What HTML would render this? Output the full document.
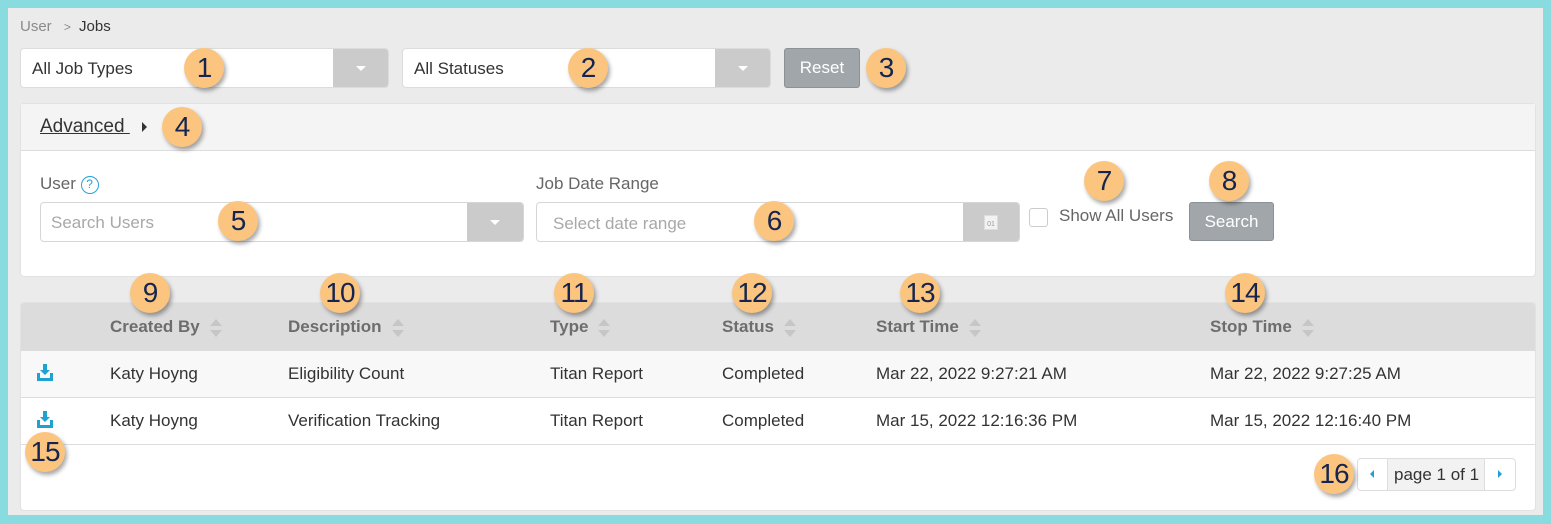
<!DOCTYPE html>
<html><head><meta charset="utf-8"><style>
*{box-sizing:border-box;margin:0;padding:0}
body{width:1551px;height:524px;background:#88dcdf;position:relative;overflow:hidden;font-family:"Liberation Sans",sans-serif;color:#333;font-size:17px}
.a{position:absolute}
#inner{left:8px;top:8px;width:1535px;height:507px;background:#ebebeb}
.sel{background:#fff;border:1px solid #dcdcdc;border-radius:4px;overflow:hidden}
.sel .t{position:absolute;left:11px;top:10px}
.sel .b{position:absolute;right:0;top:0;bottom:0;width:55px;background:#cbcbcb}
.caret{position:absolute;left:50%;top:50%;margin:-2px 0 0 -5px;border-left:5px solid transparent;border-right:5px solid transparent;border-top:5px solid #fff}
.btn{background:#a1a6aa;border:1px solid #8c9196;border-radius:3px;color:#fff;text-align:center}
.badge{width:40px;height:40px;border-radius:50%;background:#fcc57f;box-shadow:2px 3px 4px rgba(0,0,0,.35);color:#15254f;font-family:"Liberation Sans",Arial,sans-serif;font-size:28px;text-align:center;line-height:40px;letter-spacing:-1px}
.th{top:317px;font-weight:bold;color:#6d6d6d}
.sort{display:inline-block;vertical-align:middle;margin-left:10px;width:12px;height:18px;position:relative}
.sort:before{content:"";position:absolute;top:0;left:0;border-left:6px solid transparent;border-right:6px solid transparent;border-bottom:7px solid #c6c6c6}
.sort:after{content:"";position:absolute;bottom:0;left:0;border-left:6px solid transparent;border-right:6px solid transparent;border-top:7px solid #c6c6c6}
.td{color:#333}
</style></head><body>
<div id="inner" class="a"></div>
<div class="a" style="left:20px;top:18px;color:#8a8a8a;font-size:15px">User <span style="margin:0 4px 0 8px;font-size:12px">&gt;</span> <span style="color:#333">Jobs</span></div>

<div class="a sel" style="left:20px;top:48px;width:369px;height:40px"><span class="t">All Job Types</span><div class="b"><div class="caret"></div></div></div>
<div class="a sel" style="left:402px;top:48px;width:369px;height:40px"><span class="t">All Statuses</span><div class="b"><div class="caret"></div></div></div>
<div class="a btn" style="left:784px;top:48px;width:76px;height:40px;line-height:38px">Reset</div>

<div class="a" style="left:20px;top:103px;width:1516px;height:174px;background:#fff;border:1px solid #e2e2e2;border-radius:4px"></div>
<div class="a" style="left:21px;top:104px;width:1514px;height:47px;background:#f4f4f4;border-bottom:1px solid #ddd"></div>
<div class="a" style="left:40px;top:116px;font-size:19px;color:#333;text-decoration:underline">Advanced&nbsp;</div>
<div class="a" style="left:142px;top:122px;border-top:5px solid transparent;border-bottom:5px solid transparent;border-left:5px solid #333"></div>

<div class="a" style="left:40px;top:174px;color:#666">User <span style="display:inline-block;width:18px;height:18px;border:1.5px solid #27a3d6;border-radius:50%;color:#27a3d6;font-size:12px;text-align:center;line-height:15px;vertical-align:1px">?</span></div>
<div class="a sel" style="left:40px;top:202px;width:484px;height:40px;border-color:#d6d6d6"><span class="t" style="left:10px;color:#a8a8a8">Search Users</span><div class="b" style="width:56px"><div class="caret"></div></div></div>
<div class="a" style="left:536px;top:174px;color:#666">Job Date Range</div>
<div class="a sel" style="left:536px;top:202px;width:484px;height:40px;border-color:#d6d6d6"><span class="t" style="left:16px;top:11px;color:#a8a8a8">Select date range</span><div class="b" style="width:56px"><div style="position:absolute;left:21px;top:12px;width:14px;height:15px;background:#f2f2f2;border:1px solid #ddd;font-size:7px;color:#999;text-align:center;line-height:18px">01</div></div></div>
<div class="a" style="left:1029px;top:208px;width:19px;height:19px;border:1px solid #ccc;border-radius:3px;background:#fff"></div>
<div class="a" style="left:1059px;top:206px;color:#666">Show All Users</div>
<div class="a btn" style="left:1189px;top:202px;width:85px;height:39px;line-height:38px">Search</div>

<div class="a" style="left:20px;top:302px;width:1516px;height:209px;background:#fff;border:1px solid #e2e2e2;border-radius:4px;overflow:hidden">
<div class="a" style="left:0;top:0;width:100%;height:48px;background:#dcdcdc"></div>
<div class="a" style="left:0;top:48px;width:100%;height:47px;background:#f8f8f8;border-bottom:1px solid #ddd"></div>
<div class="a" style="left:0;top:95px;width:100%;height:47px;border-bottom:1px solid #ddd"></div>
</div>
<div class="a th" style="left:110px">Created By<span class="sort"></span></div>
<div class="a th" style="left:288px">Description<span class="sort"></span></div>
<div class="a th" style="left:550px">Type<span class="sort"></span></div>
<div class="a th" style="left:722px">Status<span class="sort"></span></div>
<div class="a th" style="left:876px">Start Time<span class="sort"></span></div>
<div class="a th" style="left:1210px">Stop Time<span class="sort"></span></div>

<svg class="a" style="left:36px;top:364px" width="18" height="18" viewBox="0 0 18 18"><path d="M7 0h4v6h3l-5 5-5-5h3z" fill="#1ea2d2"/><path d="M1 9h3v5h10V9h3v8H1z" fill="#1ea2d2"/></svg>
<svg class="a" style="left:36px;top:411px" width="18" height="18" viewBox="0 0 18 18"><path d="M7 0h4v6h3l-5 5-5-5h3z" fill="#1ea2d2"/><path d="M1 9h3v5h10V9h3v8H1z" fill="#1ea2d2"/></svg>
<div class="a td" style="left:110px;top:364px">Katy Hoyng</div>
<div class="a td" style="left:288px;top:364px">Eligibility Count</div>
<div class="a td" style="left:550px;top:364px">Titan Report</div>
<div class="a td" style="left:722px;top:364px">Completed</div>
<div class="a td" style="left:876px;top:364px">Mar 22, 2022 9:27:21 AM</div>
<div class="a td" style="left:1210px;top:364px">Mar 22, 2022 9:27:25 AM</div>
<div class="a td" style="left:110px;top:411px">Katy Hoyng</div>
<div class="a td" style="left:288px;top:411px">Verification Tracking</div>
<div class="a td" style="left:550px;top:411px">Titan Report</div>
<div class="a td" style="left:722px;top:411px">Completed</div>
<div class="a td" style="left:876px;top:411px">Mar 15, 2022 12:16:36 PM</div>
<div class="a td" style="left:1210px;top:411px">Mar 15, 2022 12:16:40 PM</div>

<div class="a" style="left:1357px;top:458px;width:159px;height:33px;border:1px solid #ddd;border-radius:4px;background:#fff;overflow:hidden">
<div class="a" style="left:29px;top:0;width:98px;height:31px;background:#f2f2f2;border-left:1px solid #ddd;border-right:1px solid #ddd"></div>
<div class="a" style="left:36px;top:6px;color:#333">page 1 of 1</div>
<div class="a" style="left:12px;top:11px;border-top:4px solid transparent;border-bottom:4px solid transparent;border-right:4px solid #1ea2d2"></div>
<div class="a" style="left:140px;top:11px;border-top:4px solid transparent;border-bottom:4px solid transparent;border-left:4px solid #1ea2d2"></div>
</div>

<div class="a badge" style="left:184px;top:48px">1</div>
<div class="a badge" style="left:568px;top:48px">2</div>
<div class="a badge" style="left:866px;top:48px">3</div>
<div class="a badge" style="left:162px;top:107px">4</div>
<div class="a badge" style="left:218px;top:201px">5</div>
<div class="a badge" style="left:754px;top:201px">6</div>
<div class="a badge" style="left:1084px;top:161px">7</div>
<div class="a badge" style="left:1209px;top:161px">8</div>
<div class="a badge" style="left:130px;top:273px">9</div>
<div class="a badge" style="left:320px;top:273px">10</div>
<div class="a badge" style="left:554px;top:273px">11</div>
<div class="a badge" style="left:732px;top:273px">12</div>
<div class="a badge" style="left:900px;top:273px">13</div>
<div class="a badge" style="left:1225px;top:273px">14</div>
<div class="a badge" style="left:25px;top:432px">15</div>
<div class="a badge" style="left:1314px;top:454px">16</div>
</body></html>
